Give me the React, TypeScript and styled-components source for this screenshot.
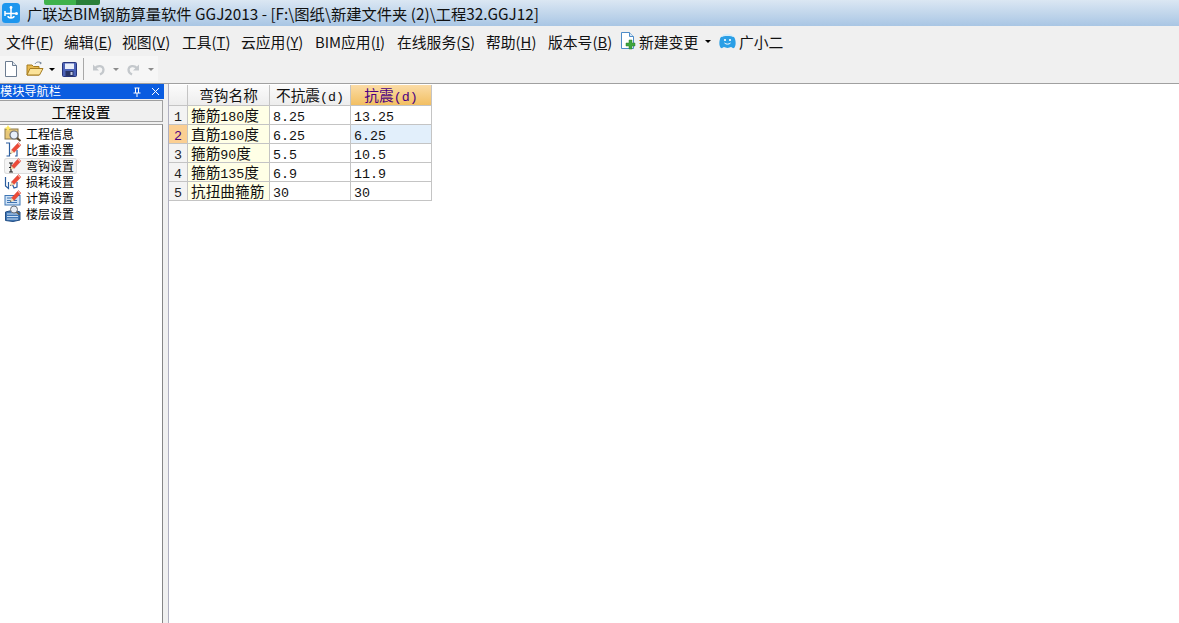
import React from "react";
import styled, { createGlobalStyle } from "styled-components";

const Global = createGlobalStyle`
  html, body { margin: 0; padding: 0; background: #fff; overflow: hidden; }
  #root { width: 1179px; height: 623px; }
`;
const UI = `"Noto Sans CJK SC", "Liberation Sans", sans-serif`;

const Page = styled.div`
  width: 1179px; height: 623px; display: flex; flex-direction: column;
  overflow: hidden; font-family: ${UI}; color: #000;
`;
const TitleBar = styled.div`
  height: 26px; flex: none; position: relative; display: flex; align-items: center;
  padding-left: 2px; gap: 7px;
  background: linear-gradient(#dbe7f3, #a9c6e4);
`;
const Progress = styled.div`
  position: absolute; left: 44px; top: 0; width: 56px; height: 5px; border-radius: 0 0 2px 2px;
  background: linear-gradient(90deg, #3fb24c 0 57%, #2a7f3a 57% 100%);
`;
const TitleText = styled.span`
  font-size: 15.3px; line-height: 24px; white-space: nowrap; color: #101010;
`;
const MenuBar = styled.div`
  height: 30px; flex: none; background: #f0f0f0; display: flex; align-items: center;
  padding-left: 6px; font-size: 14.8px; white-space: nowrap;
`;
const MenuItem = styled.span<{ $w: number }>`
  width: ${p => p.$w}px; flex: none; display: inline-flex; align-items: center; gap: 3px;
  color: #111;
`;
const ToolBar = styled.div`
  height: 28px; flex: none; background: #f0f0f0; border-bottom: 1px solid #a0a0a0;
  box-sizing: border-box; display: flex; align-items: flex-start;
`;
const ToolGroup = styled.div`
  width: 158px; height: 25px; background: #f6f6f6; display: flex; align-items: center;
  padding: 1px 0 0 4px; box-sizing: border-box;
`;
const ToolGap = styled.span`
  width: 8px; flex: none;
`;
const ToolSep = styled.div`
  width: 1px; height: 22px; background: #a8a8a8; margin: 0 8px 0 6px;
`;
const Caret = styled.span<{ $c?: string; $l?: number; $r?: number }>`
  width: 0; height: 0; flex: none; border-left: 3px solid transparent; border-right: 3px solid transparent;
  border-top: 3px solid ${p => p.$c || "#000"};
  margin: 1px ${p => p.$r ?? 0}px 0 ${p => p.$l ?? 0}px;
`;
const Body = styled.div`
  flex: 1; display: flex; min-height: 0; background: #fff;
`;
const Side = styled.div`
  width: 164px; flex: none; box-sizing: border-box;
  display: flex; flex-direction: column; background: #f0f0f0;
`;
const SideHead = styled.div`
  height: 15px; flex: none; background: #0a5ce0; color: #fff; display: flex; align-items: center;
  font-size: 12.2px; line-height: 15px; padding-right: 4px;
`;
const SideTitle = styled.span`
  flex: 1;
`;
const Tab = styled.div`
  height: 22px; flex: none; box-sizing: border-box; margin: 1px 1px 0 0;
  border: 1px solid #a0a0a0; border-left: none; background: #f0f0f0;
  display: flex; align-items: center; justify-content: center; font-size: 14.7px;
`;
const List = styled.div`
  flex: 1; margin: 2px 1px 0 0; background: #fff; border-top: 1px solid #a0a0a0;
  border-right: 1px solid #858585; padding-top: 1px;
`;
const Item = styled.div<{ $sel?: boolean }>`
  height: 16px; position: relative; display: flex; align-items: center; margin-left: 4px;
  width: 73px; box-sizing: border-box; font-size: 12px; line-height: 16px; white-space: nowrap;
  border-radius: 3px;
  ${p => p.$sel ? "background:#f4f4f4; box-shadow: inset 0 0 0 1px #dcdcdc;" : ""}
`;
const ItemIcon = styled.span`
  width: 18px; height: 16px; flex: none; margin-right: 4px; display: block; position: relative;
  svg { position: absolute; left: 0; top: 0; overflow: visible; }
`;
const Splitter = styled.div`
  width: 4px; flex: none; background: #f0f0f0; border-right: 1px solid #b0b0c0;
`;
const GridArea = styled.div`
  flex: 1; background: #fff; padding-top: 1px;
`;
const Grid = styled.div`
  display: grid; grid-template-columns: 19px 82px 81px 81px; grid-template-rows: 21px repeat(5, 19px);
  width: 263px; font-size: 14.67px; line-height: 18px;
`;
const GCell = styled.div`
  box-sizing: border-box; border-right: 1px solid #c4c4c4; border-bottom: 1px solid #c4c4c4;
  white-space: nowrap; height: 100%; min-width: 0;
`;
const Th = styled(GCell)<{ $active?: boolean }>`
  text-align: center; line-height: 20px;
  background: ${p => p.$active ? "linear-gradient(#fbdca6,#f2bf62)" : "linear-gradient(#fbfbfb,#ededed)"};
  color: ${p => p.$active ? "#4b0082" : "#111"};
`;
const RowHead = styled(GCell)<{ $active?: boolean }>`
  text-align: center;
  background: ${p => p.$active ? "#fbcf92" : "#f3f3f3"};
  color: ${p => p.$active ? "#4b0082" : "#222"};
`;
const Cell = styled(GCell)<{ $name?: boolean; $sel?: boolean }>`
  padding-left: 3px; color: #111;
  background: ${p => p.$name ? "#ffffe6" : p.$sel ? "#e2effb" : "#fff"};
`;
const Latin = styled.span`
  font-family: "Liberation Mono", monospace; font-size: 13.33px;
`;

const T = ({ s }: { s: string }) => (
  <>
    {s.split(/([\x20-\x7e]+)/).map((part, i) =>
      /[\x20-\x7e]/.test(part) ? <Latin key={i}>{part}</Latin> : part
    )}
  </>
);

const AppLogo = () => (
  <svg width="18" height="20" viewBox="0 0 18 20">
    <rect x="0" y="0" width="18" height="20" rx="3.5" fill="#1c96ee" />
    <path d="M3 10.500h11M9 4.500v11M3 8v5M6 13c0 2.500 6 2.500 6 0" fill="none" stroke="#fff" strokeWidth="1.500" />
    <circle cx="14.500" cy="10.500" r="1.500" fill="#fff" />
    <circle cx="9" cy="4.500" r="1.400" fill="#fff" />
  </svg>
);
const NewChange = () => (
  <svg width="16" height="18" viewBox="0 0 16 18">
    <path d="M1.500 .5h8l4 4v12h-12z" fill="#fff" stroke="#4d8cc8" />
    <path d="M9.500 .5v4h4" fill="#d6e6f4" stroke="#4d8cc8" />
    <path d="M9 8h3v3h3v3h-3v3H9v-3H6v-3h3z" fill="#3fa63c" stroke="#2d7f2d" strokeWidth=".5" />
  </svg>
);
const Mascot = () => (
  <svg width="17" height="16" viewBox="0 0 17 16">
    <path d="M1 6c1-5 14-5 15 0 1.300 4 .5 8-1 9-1.500.6-2-1-3-1s-2 1-3.500 1S6 14 5 14s-1.500 1.600-3 1C.5 14-.3 10 1 6z" fill="#2b9fe6" />
    <path d="M2 4c2-4.500 11-4.500 13 0-3-1.500-10-1.500-13 0z" fill="#d5ecfa" />
    <circle cx="6" cy="7" r="1.100" fill="#fff" />
    <circle cx="11" cy="7" r="1.100" fill="#fff" />
    <path d="M5.500 10c1.500 1.500 4.500 1.500 6 0" stroke="#fff" fill="none" />
  </svg>
);
const NewDoc = () => (
  <svg width="14" height="16" viewBox="0 0 14 16">
    <path d="M1.500.5h7l4 4v11h-11z" fill="#fff" stroke="#6c7c90" />
    <path d="M8.500.5v4h4" fill="#dfe6ee" stroke="#6c7c90" />
  </svg>
);
const OpenDoc = () => (
  <svg width="18" height="16" viewBox="0 0 18 16">
    <path d="M1 4h5l1.500 1.500H13V14H1z" fill="#e8b94f" stroke="#a57c20" />
    <path d="M1 14l3-6.500h13L13.500 14z" fill="#fbe39a" stroke="#a57c20" />
    <path d="M9 3c1.500-2.500 4-2.500 6-1" fill="none" stroke="#7a8a9c" />
    <path d="M13.500.500l2.500 1.500-2 1.500z" fill="#7a8a9c" />
  </svg>
);
const Save = () => (
  <svg width="15" height="15" viewBox="0 0 15 15">
    <rect x=".5" y=".5" width="14" height="14" rx="1" fill="#4c63b8" stroke="#27357c" />
    <rect x="3" y="1.500" width="9" height="5.500" fill="#e9eefa" />
    <rect x="3.500" y="9" width="8" height="5" fill="#2a3566" />
    <rect x="8.500" y="10" width="2" height="3" fill="#c4cce6" />
  </svg>
);
const Undo = ({ flip }: { flip?: boolean }) => (
  <svg width="14" height="14" viewBox="0 0 14 14" style={flip ? { transform: "scaleX(-1)" } : undefined}>
    <path d="M3 6c3-3 8-2.500 8.500 1.500.2 2.500-1.500 4-3.500 5" fill="none" stroke="#c4c8cc" strokeWidth="2.200" />
    <path d="M1 2.500v6h6z" fill="#c4c8cc" />
  </svg>
);
const Pencil = () => (
  <>
    <path d="M7.500 8L14.500 .5 17 3 10 10.500z" fill="#ee4a36" stroke="#c8342a" strokeWidth=".5" />
    <path d="M14.500 .5L17 3l-1 1-2.500-2.500z" fill="#f7b3a8" />
    <path d="M7.500 8L6 12l4-1.500z" fill="#f2d9a8" />
    <path d="M6.800 10.500L6 12l1.500-.6z" fill="#333" />
  </>
);
const ListIcon = ({ k }: { k: number }) => (
  <ItemIcon>
    <svg width="18" height="16" viewBox="0 0 18 16">
      {k === 0 && (
        <>
          <rect x="1" y="3" width="13" height="10" fill="#e8c878" stroke="#8c7a4c" />
          <circle cx="10" cy="9" r="4" fill="#e8f0fa" stroke="#6b6f78" strokeWidth="1.200" />
          <path d="M13 12l3.500 3" stroke="#5a4a30" strokeWidth="2" />
          <path d="M4 -1l1.200 2.300 2.300.7-2.300 1-1.200 2.300-1.200-2.300-2.300-1 2.300-.7z" fill="#ffe85c" />
        </>
      )}
      {k === 1 && (
        <>
          <path d="M2 1h3.500v13H2.500M13 8v6h-2" fill="none" stroke="#2b5d9e" strokeWidth="1.200" />
          <Pencil />
        </>
      )}
      {k === 2 && (
        <>
          <path d="M5 5h4M7 5v9M5 9.500h4M5 14h4" fill="none" stroke="#222" strokeWidth="1.200" />
          <Pencil />
        </>
      )}
      {k === 3 && (
        <>
          <path d="M1.500 3v9l3 2.500V8M7.500 8l2.500 6 3-1V8" fill="none" stroke="#2b5d9e" strokeWidth="1.200" />
          <Pencil />
        </>
      )}
      {k === 4 && (
        <>
          <rect x="1" y="5.500" width="15" height="9.500" fill="#cfe2f6" stroke="#3f76b4" />
          <path d="M3 8h5M3 10.500h10M3 12.500h10" stroke="#3f76b4" />
          <Pencil />
        </>
      )}
      {k === 5 && (
        <>
          <path d="M1.500 6l8-2 6.500 2v8l-7 1.500-7.500-1z" fill="#3f76b4" stroke="#234f86" />
          <path d="M3 8h11M3 10.500h11M3 13h11" stroke="#cfe2f6" />
          <circle cx="10" cy="3.500" r="3.500" fill="#e8edf4" stroke="#6b6f78" />
          <path d="M12.500 6l3 2.500" stroke="#6b5a40" strokeWidth="1.600" />
        </>
      )}
    </svg>
  </ItemIcon>
);
const Pin = () => (
  <svg width="10" height="10" viewBox="0 0 10 10" style={{ flex: "none", marginRight: 9 }}>
    <path d="M2.500 1h5M3.500 1v5M6.500 1v5M1.500 6h7M5 6v4" stroke="#fff" fill="none" />
  </svg>
);
const Close = () => (
  <svg width="9" height="9" viewBox="0 0 9 9" style={{ flex: "none" }}>
    <path d="M1 1l7 7M8 1l-7 7" stroke="#fff" />
  </svg>
);

const menus: [string, string, string, number][] = [
  ["文件(", "F", ")", 58],
  ["编辑(", "E", ")", 58],
  ["视图(", "V", ")", 60],
  ["工具(", "T", ")", 59],
  ["云应用(", "Y", ")", 74],
  ["BIM应用(", "I", ")", 82],
  ["在线服务(", "S", ")", 89],
  ["帮助(", "H", ")", 62],
  ["版本号(", "B", ")", 72],
];
const items = ["工程信息", "比重设置", "弯钩设置", "损耗设置", "计算设置", "楼层设置"];
const rows = [
  ["箍筋180度", "8.25", "13.25"],
  ["直筋180度", "6.25", "6.25"],
  ["箍筋90度", "5.5", "10.5"],
  ["箍筋135度", "6.9", "11.9"],
  ["抗扭曲箍筋", "30", "30"],
];

export default function App() {
  return (
    <Page>
      <Global />
      <TitleBar>
        <AppLogo />
        <Progress />
        <TitleText>广联达BIM钢筋算量软件 GGJ2013 - [F:\图纸\新建文件夹 (2)\工程32.GGJ12]</TitleText>
      </TitleBar>
      <MenuBar>
        {menus.map(([a, u, c, w]) => (
          <MenuItem key={a} $w={w}>
            <span>{a}<u>{u}</u>{c}</span>
          </MenuItem>
        ))}
        <MenuItem $w={99}>
          <NewChange />
          <span>新建变更</span>
          <Caret $l={4} />
        </MenuItem>
        <MenuItem $w={70}>
          <Mascot />
          <span>广小二</span>
        </MenuItem>
      </MenuBar>
      <ToolBar>
        <ToolGroup>
          <NewDoc />
          <ToolGap />
          <OpenDoc />
          <Caret $l={5} $r={7} />
          <Save />
          <ToolSep />
          <Undo />
          <Caret $c="#8c8c8c" $l={7} $r={7} />
          <Undo flip />
          <Caret $c="#8c8c8c" $l={8} />
        </ToolGroup>
      </ToolBar>
      <Body>
        <Side>
          <SideHead>
            <SideTitle>模块导航栏</SideTitle>
            <Pin />
            <Close />
          </SideHead>
          <Tab>工程设置</Tab>
          <List>
            {items.map((t, i) => (
              <Item key={t} $sel={i === 2}>
                <ListIcon k={i} />
                {t}
              </Item>
            ))}
          </List>
        </Side>
        <Splitter />
        <GridArea>
          <Grid>
            <Th />
            <Th>弯钩名称</Th>
            <Th><T s="不抗震(d)" /></Th>
            <Th $active><T s="抗震(d)" /></Th>
            {rows.map((r, i) => (
              <React.Fragment key={i}>
                <RowHead $active={i === 1}><Latin>{i + 1}</Latin></RowHead>
                <Cell $name><T s={r[0]} /></Cell>
                <Cell><T s={r[1]} /></Cell>
                <Cell $sel={i === 1}><T s={r[2]} /></Cell>
              </React.Fragment>
            ))}
          </Grid>
        </GridArea>
      </Body>
    </Page>
  );
}
